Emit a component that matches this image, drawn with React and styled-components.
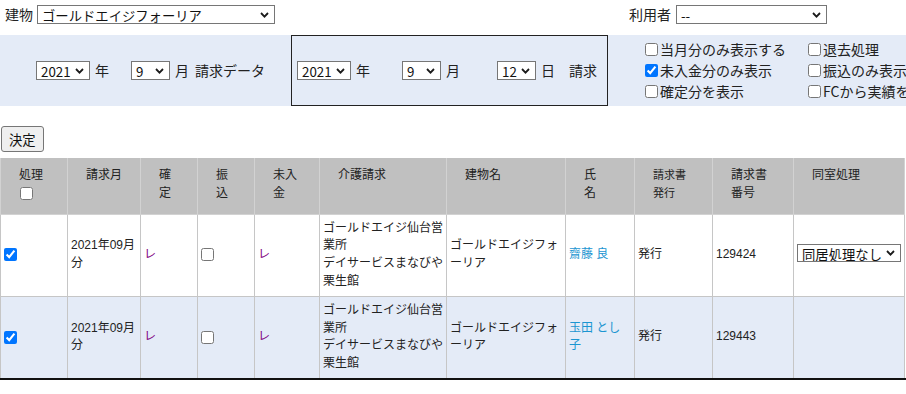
import styled, { createGlobalStyle } from 'styled-components'

const GlobalStyle = createGlobalStyle`
  html, body {
    margin: 0;
    padding: 0;
    background: #fff;
  }
  body {
    font-family: "Liberation Sans", "Noto Sans CJK JP", sans-serif;
    color: #222;
    overflow: hidden;
  }
`

const TopBar = styled.div`
  height: 35px;
  box-sizing: border-box;
  padding: 5px 0 0 5px;
  display: flex;
  align-items: flex-start;
`

const Field = styled.div`
  display: flex;
  align-items: center;
  gap: ${props => props.$gap || 4}px;
  margin-left: ${props => props.$offset || 0}px;
  height: 19px;
`

const FieldLabel = styled.span`
  font-family: "Noto Sans CJK JP", sans-serif;
  font-size: 14px;
  line-height: 19px;
`

const SelectWrap = styled.span`
  position: relative;
  display: inline-flex;
  flex-shrink: 0;
  width: ${props => props.$w}px;
  height: ${props => props.$h || 19}px;
`

const NativeSelect = styled.select`
  appearance: none;
  width: 100%;
  height: 100%;
  box-sizing: border-box;
  margin: 0;
  border: 1px solid #767676;
  border-radius: 0;
  background: #fff;
  color: #111;
  font-family: "Noto Sans CJK JP", sans-serif;
  font-size: 13.33px;
  padding: 0 16px 0 4px;
  outline: none;
`

const Chevron = styled.svg`
  position: absolute;
  right: 6px;
  top: 50%;
  margin-top: -3px;
  pointer-events: none;
`

const Select = ({w, h, value, options}) => (
  <SelectWrap $w={w} $h={h}>
    <NativeSelect defaultValue={value}>
      {(options || [value]).map(o => (
        <option key={o}>{o}</option>
      ))}
    </NativeSelect>
    <Chevron width="9" height="6" viewBox="0 0 9 6">
      <path d="M1 1 L4.5 4.6 L8 1" fill="none" stroke="#1a1a1a" strokeWidth="1.8" />
    </Chevron>
  </SelectWrap>
)

const Band = styled.div`
  height: 71px;
  background: #e4ebf7;
  display: flex;
  overflow: hidden;
`

const PeriodCell = styled.div`
  width: 291px;
  flex-shrink: 0;
  box-sizing: border-box;
  padding-left: 36px;
  display: flex;
  align-items: center;
`

const DateBox = styled.div`
  width: 317px;
  flex-shrink: 0;
  box-sizing: border-box;
  border: 1px solid #222;
  padding-left: 5px;
  display: flex;
  align-items: center;
`

const Unit = styled.span`
  font-family: "Noto Sans CJK JP", sans-serif;
  font-size: 14px;
  line-height: 19px;
  white-space: nowrap;
  margin-left: ${props => (props.$before === undefined ? 5 : props.$before)}px;
  margin-right: ${props => props.$after || 0}px;
`

const Options = styled.div`
  flex-shrink: 0;
  padding-left: 33px;
  display: grid;
  grid-template-columns: 163px max-content;
  grid-auto-rows: 21px;
  align-content: center;
  white-space: nowrap;
`

const Option = styled.label`
  display: flex;
  align-items: center;
  font-family: "Noto Sans CJK JP", sans-serif;
  font-size: 14px;
  line-height: 21px;

  input {
    margin: 0 2px 0 4px;
    width: 13px;
    height: 13px;
  }
`

const ButtonRow = styled.div`
  margin-top: 20px;
  padding-left: 1px;
  height: 26px;
`

const Button = styled.button`
  height: 26px;
  padding: 0 7px;
  border: 1px solid #767676;
  border-radius: 3px;
  background: #efefef;
  color: #111;
  font-family: "Noto Sans CJK JP", sans-serif;
  font-size: 13.33px;
`

const TableWrap = styled.div`
  margin-top: 6px;
  border-bottom: 2px solid #111;
`

const Table = styled.table`
  width: 905px;
  border-collapse: collapse;
  table-layout: fixed;
`

const HeadCell = styled.th`
  height: 56px;
  box-sizing: border-box;
  background: #c0c0c0;
  border: 1px solid #d2d2d2;
  border-top: none;
  padding: 8px 2px 0 18px;
  vertical-align: top;
  text-align: left;
  font-weight: normal;
  font-size: ${props => (props.$small ? 11 : 12)}px;
  line-height: 18px;
  color: #222;

  input {
    display: block;
    margin: 3px 0 0 1px;
    width: 13px;
    height: 13px;
  }
`

const BodyRow = styled.tr`
  height: 82px;
  background: ${props => (props.$alt ? '#e4ebf7' : '#fff')};

  &:last-child td {
    border-bottom: none;
  }
`

const Cell = styled.td`
  border: 1px solid #c6c6c6;
  padding: 3px 2px 3px 3px;
  vertical-align: middle;
  font-size: 12px;
  line-height: 17.7px;
  color: #222;

  input[type='checkbox'] {
    margin: 0;
    width: 13px;
    height: 13px;
    vertical-align: middle;
  }
`

const Mark = styled.span`
  color: #800080;
`

const NameLink = styled.a`
  color: #1b95d1;
  text-decoration: none;
`

const Line = styled.div``

const widths = [67, 73, 57, 57, 65, 127, 119, 69, 78, 81, 111]

const headers = [
  {lines: ['処理'], check: true},
  {lines: ['請求月']},
  {lines: ['確', '定']},
  {lines: ['振', '込']},
  {lines: ['未入', '金']},
  {lines: ['介護請求']},
  {lines: ['建物名']},
  {lines: ['氏', '名']},
  {lines: ['請求書', '発行'], small: true},
  {lines: ['請求書', '番号']},
  {lines: ['同室処理']},
]

const rows = [
  {
    month: '2021年09月分',
    care: ['ゴールドエイジ仙台営業所', 'デイサービスまなびや栗生館'],
    building: 'ゴールドエイジフォーリア',
    name: '齋藤 良',
    issue: '発行',
    number: '129424',
    room: true,
  },
  {
    month: '2021年09月分',
    care: ['ゴールドエイジ仙台営業所', 'デイサービスまなびや栗生館'],
    building: 'ゴールドエイジフォーリア',
    name: '玉田 とし子',
    issue: '発行',
    number: '129443',
    room: false,
  },
]

export default function App() {
  return (
    <>
      <GlobalStyle />
      <TopBar>
        <Field>
          <FieldLabel>建物</FieldLabel>
          <Select w={238} value="ゴールドエイジフォーリア" />
        </Field>
        <Field $offset={354} $gap={5}>
          <FieldLabel>利用者</FieldLabel>
          <Select w={151} value="--" />
        </Field>
      </TopBar>

      <Band>
        <PeriodCell>
          <Select w={54} value="2021" />
          <Unit $after={22}>年</Unit>
          <Select w={39} value="9" />
          <Unit>月</Unit>
          <Unit $before={6}>請求データ</Unit>
        </PeriodCell>
        <DateBox>
          <Select w={54} value="2021" />
          <Unit $after={32}>年</Unit>
          <Select w={39} value="9" />
          <Unit $after={37}>月</Unit>
          <Select w={39} value="12" />
          <Unit $after={14}>日</Unit>
          <Unit $before={0}>請求</Unit>
        </DateBox>
        <Options>
          <Option><input type="checkbox" />当月分のみ表示する</Option>
          <Option><input type="checkbox" />退去処理</Option>
          <Option><input type="checkbox" defaultChecked />未入金分のみ表示</Option>
          <Option><input type="checkbox" />振込のみ表示する</Option>
          <Option><input type="checkbox" />確定分を表示</Option>
          <Option><input type="checkbox" />FCから実績を取り込む</Option>
        </Options>
      </Band>

      <ButtonRow>
        <Button>決定</Button>
      </ButtonRow>

      <TableWrap>
        <Table>
          <colgroup>
            {widths.map((w, i) => (
              <col key={i} style={{width: w}} />
            ))}
          </colgroup>
          <thead>
            <tr>
              {headers.map((h, i) => (
                <HeadCell key={i} $small={h.small}>
                  {h.lines.map(l => (
                    <Line key={l}>{l}</Line>
                  ))}
                  {h.check && <input type="checkbox" />}
                </HeadCell>
              ))}
            </tr>
          </thead>
          <tbody>
            {rows.map((r, i) => (
              <BodyRow key={r.number} $alt={i % 2 === 1}>
                <Cell><input type="checkbox" defaultChecked /></Cell>
                <Cell>{r.month}</Cell>
                <Cell><Mark>レ</Mark></Cell>
                <Cell><input type="checkbox" /></Cell>
                <Cell><Mark>レ</Mark></Cell>
                <Cell>
                  {r.care.map(c => (
                    <Line key={c}>{c}</Line>
                  ))}
                </Cell>
                <Cell>{r.building}</Cell>
                <Cell><NameLink href="#">{r.name}</NameLink></Cell>
                <Cell>{r.issue}</Cell>
                <Cell>{r.number}</Cell>
                <Cell>
                  {r.room && (
                    <Select w={104} h={18} value="同居処理なし" options={['同居処理なし', '同居処理あり']} />
                  )}
                </Cell>
              </BodyRow>
            ))}
          </tbody>
        </Table>
      </TableWrap>
    </>
  )
}
